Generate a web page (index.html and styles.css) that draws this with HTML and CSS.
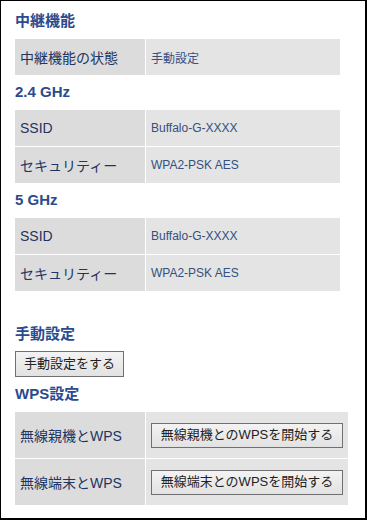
FILE: index.html
```html
<!DOCTYPE html>
<html lang="ja">
<head>
  <meta charset="UTF-8" />
  <meta name="viewport" content="width=device-width, initial-scale=1" />
  <title>中継機能</title>
  <link rel="stylesheet" href="styles.css">
</head>
<body>
  <div class="marco">

    <!-- Estado del repetidor -->
    <h2 class="titulo primero">中継機能</h2>
    <table class="tabla">
      <tr><td class="etq">中継機能の状態</td><td class="val">手動設定</td></tr>
    </table>

    <h2 class="titulo">2.4 GHz</h2>
    <table class="tabla">
      <tr><td class="etq">SSID</td><td class="val">Buffalo-G-XXXX</td></tr>
      <tr><td class="etq">セキュリティー</td><td class="val">WPA2-PSK AES</td></tr>
    </table>

    <h2 class="titulo">5 GHz</h2>
    <table class="tabla">
      <tr><td class="etq">SSID</td><td class="val">Buffalo-G-XXXX</td></tr>
      <tr><td class="etq">セキュリティー</td><td class="val">WPA2-PSK AES</td></tr>
    </table>

    <!-- Configuración manual -->
    <h2 class="titulo seccion">手動設定</h2>
    <button class="boton manual">手動設定をする</button>

    <!-- WPS -->
    <h2 class="titulo">WPS設定</h2>
    <table class="tabla wps">
      <tr>
        <td class="etq">無線親機とWPS</td>
        <td class="val"><button class="boton">無線親機とのWPSを開始する</button></td>
      </tr>
      <tr>
        <td class="etq">無線端末とWPS</td>
        <td class="val"><button class="boton">無線端末とのWPSを開始する</button></td>
      </tr>
    </table>

  </div>
</body>
</html>
```

FILE: styles.css
```css
/* ---------- Colores ---------- */
:root{
  --titulo:#2a4b8d;
  --etiqueta:#223461;
  --valor:#34507f;
  --fondo-etq:#dcdcdc;
  --fondo-val:#e4e4e4;
}
/* ---------- Base ---------- */
*{box-sizing:border-box}
html,body{margin:0;height:520px}
body{
  border-style:solid;
  border-color:#000;
  border-width:1px 2px 2px 1px;
  background:#fff;
  font-family:"Liberation Sans","Noto Sans CJK JP",Arial,sans-serif;
  overflow:hidden;
}
.marco{
  padding:4px 0 0 14px;
}

/* ---------- Titulos ---------- */
.titulo{
  margin:6px 0 7px;
  font-size:15px;
  line-height:20px;
  font-weight:bold;
  color:var(--titulo);
}
.titulo.seccion{margin-top:32px}

/* ---------- Tablas ---------- */
.tabla{
  border-collapse:separate;
  border-spacing:1px;
  margin-left:-1px;
  width:327px;
}
.tabla td{
  height:36px;
  padding:0 5px;
  vertical-align:middle;
}
.etq{
  width:130px;
  background:var(--fondo-etq);
  color:var(--etiqueta);
  font-size:14px;
}
.val{
  background:var(--fondo-val);
  color:var(--valor);
  font-size:12px;
}
.tabla.wps{width:auto}
.tabla.wps td{height:46px}

/* ---------- Botones ---------- */
.boton{
  display:block;
  margin:0;
  height:26px;
  padding:0;
  border:1px solid #707070;
  border-radius:0;
  background:linear-gradient(#f3f3f3,#e2e2e2);
  color:#222;
  font-family:"Liberation Sans","Noto Sans CJK JP",Arial,sans-serif;
  font-size:13px;
  line-height:22px;
  text-align:center;
}
.boton.manual{width:109px}
.wps .boton{
  width:192px;
  height:25px;
}
.marco > .boton + .titulo{margin-top:7px}
```
